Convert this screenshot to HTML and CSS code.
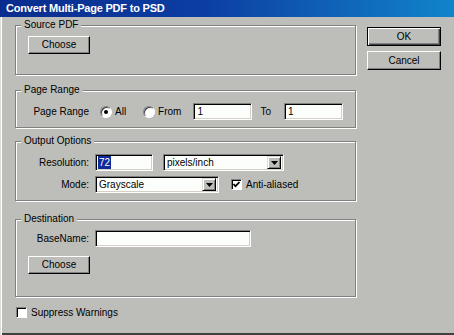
FILE: index.html
```html
<!DOCTYPE html>
<html lang="en">
<head>
    <meta charset="UTF-8">
    <title>Convert Multi-Page PDF to PSD</title>
    <link rel="stylesheet" href="styles.css">
</head>
<body>
    <div class="dialog">
        <div class="titlebar">Convert Multi-Page PDF to PSD</div>
        <div class="content">
            <div class="main">
                <div class="group source">
                    <div class="group-title">Source PDF</div>
                    <div class="btn choose">Choose</div>
                </div>

                <div class="group range">
                    <div class="group-title">Page Range</div>
                    <div class="row">
                        <span class="label-col">Page Range</span>
                        <span class="radio on first"></span>
                        <span class="opt-text">All</span>
                        <span class="radio from"></span>
                        <span class="opt-text">From</span>
                        <div class="field page-from">1</div>
                        <span class="to-text">To</span>
                        <div class="field page-to">1</div>
                    </div>
                </div>

                <div class="group output">
                    <div class="group-title">Output Options</div>
                    <div class="row">
                        <span class="label-col">Resolution:</span>
                        <div class="field res"><span class="sel">72</span></div>
                        <div class="field select units">
                            <span class="value">pixels/inch</span>
                            <span class="drop"><svg width="7" height="4" viewBox="0 0 7 4"><polygon points="0,0 7,0 3.5,4" fill="#000"/></svg></span>
                        </div>
                    </div>
                    <div class="row second">
                        <span class="label-col">Mode:</span>
                        <div class="field select mode">
                            <span class="value">Grayscale</span>
                            <span class="drop"><svg width="7" height="4" viewBox="0 0 7 4"><polygon points="0,0 7,0 3.5,4" fill="#000"/></svg></span>
                        </div>
                        <span class="checkbox aa"><svg width="7" height="7" viewBox="0 0 7 7"><polyline points="0.5,3 2.5,5.2 6.5,1" fill="none" stroke="#000" stroke-width="1.7"/></svg></span>
                        <span class="opt-text">Anti-aliased</span>
                    </div>
                </div>

                <div class="group dest">
                    <div class="group-title">Destination</div>
                    <div class="row">
                        <span class="label-col">BaseName:</span>
                        <div class="field basename"></div>
                    </div>
                    <div class="btn choose">Choose</div>
                </div>

                <div class="suppress">
                    <span class="checkbox"></span>
                    <span class="opt-text">Suppress Warnings</span>
                </div>
            </div>

            <div class="side">
                <div class="btn default">OK</div>
                <div class="btn">Cancel</div>
            </div>
        </div>
    </div>
</body>
</html>
```

FILE: styles.css
```css
body {
    margin: 0;
    background-color: #bdbeba;
}

.dialog {
    width: 454px;
    height: 335px;
    box-sizing: border-box;
    overflow: hidden;
    background-color: #bdbeba;
    font-family: "Liberation Sans", Arial, sans-serif;
    font-size: 10px;
    color: #000;
    box-shadow: inset 1px 0 #dcdcd8, inset 2px 0 #fff, inset 0 -2px #404040;
}

.titlebar {
    height: 17px;
    line-height: 17px;
    padding-left: 6px;
    color: #fff;
    font-size: 11px;
    font-weight: bold;
    letter-spacing: -0.2px;
    background: linear-gradient(90deg, #0a2c8e 0%, #0c3ea2 45%, #1184cb 100%);
}

.content {
    display: flex;
    padding: 8px 0 0 15px;
}

.main {
    width: 341px;
}

.side {
    display: flex;
    flex-direction: column;
    gap: 5px;
    margin: 2px 0 0 11px;
}

/* group boxes with the etched frame */
.group {
    border: 1px solid #808080;
    box-shadow: inset 1px 1px #fff, 1px 1px #fff;
    padding: 0 12px;
}

.group-title {
    width: fit-content;
    margin: -7px 0 0 -7px;
    padding: 0 3px;
    line-height: 12px;
    background-color: #bdbeba;
}

.source { padding-bottom: 20px; }
.source .choose { margin-top: 5px; }

.range { margin-top: 15px; padding-bottom: 7px; }
.range .row { margin-top: 7px; }

.output { margin-top: 13px; padding-bottom: 7px; }
.output .row { margin-top: 7px; }
.output .row.second { margin-top: 5px; }

.dest { margin-top: 18px; padding-bottom: 22px; }
.dest .row { margin-top: 5px; }
.dest .choose { margin-top: 9px; }

.row {
    display: flex;
    align-items: center;
    height: 17px;
}

.label-col {
    width: 61px;
    margin-right: 6px;
    text-align: right;
    white-space: nowrap;
}

.opt-text {
    white-space: nowrap;
}

/* buttons */
.btn {
    box-sizing: border-box;
    width: 74px;
    height: 19px;
    line-height: 17px;
    text-align: center;
    border: 1px solid;
    border-color: #fff #000 #000 #fff;
    box-shadow: inset -1px -1px #808080;
    background-color: #bdbeba;
}

.btn.choose {
    width: 62px;
    height: 18px;
    line-height: 16px;
}

.btn.default {
    border-color: #000;
    box-shadow: inset 1px 1px #fff, inset -1px -1px #404040, inset -2px -2px #808080;
}

/* sunken text fields */
.field {
    box-sizing: border-box;
    height: 17px;
    display: flex;
    align-items: center;
    padding-left: 3px;
    background-color: #fcfefc;
    border: 1px solid;
    border-color: #808080 #fff #fff #808080;
    box-shadow: inset 1px 1px #000, inset -1px -1px #d4d0c8;
}

.page-from { width: 59px; margin-left: 12px; }
.to-text { margin-left: 8px; }
.page-to { width: 59px; margin-left: 13px; }

.res { width: 58px; padding-left: 2px; }
.sel {
    padding: 0 1px;
    line-height: 13px;
    color: #fff;
    background-color: #102a9c;
}

.units { width: 121px; margin-left: 10px; }
.mode { width: 124px; }
.basename { width: 156px; }

.select .value {
    flex: 1;
}

.select .drop {
    box-sizing: border-box;
    width: 14px;
    height: 13px;
    margin-right: 2px;
    display: flex;
    align-items: center;
    justify-content: center;
    border: 1px solid;
    border-color: #dcdcd8 #000 #000 #dcdcd8;
    box-shadow: inset 1px 1px #fff, inset -1px -1px #808080;
    background-color: #bdbeba;
}

/* radio buttons and check boxes */
.radio {
    position: relative;
    box-sizing: border-box;
    width: 12px;
    height: 12px;
    margin-right: 3px;
    border-radius: 50%;
    background-color: #fff;
    border: 1px solid;
    border-color: #808080 #fff #fff #808080;
    box-shadow: inset 1px 1px #404040;
}

.radio.on::after {
    content: "";
    position: absolute;
    left: 3px;
    top: 3px;
    width: 4px;
    height: 4px;
    border-radius: 50%;
    background-color: #000;
}

.radio.first { margin-left: 5px; }
.radio.from { margin-left: 17px; }

.checkbox {
    box-sizing: border-box;
    width: 11px;
    height: 11px;
    display: flex;
    align-items: center;
    justify-content: center;
    background-color: #fff;
    border: 1px solid;
    border-color: #808080 #fff #fff #808080;
    box-shadow: inset 1px 1px #000;
}

.checkbox.aa {
    margin: 0 4px 0 12px;
}

.suppress {
    display: flex;
    align-items: center;
    height: 12px;
    margin: 9px 0 0 1px;
}

.suppress .checkbox {
    margin-right: 4px;
}
```
